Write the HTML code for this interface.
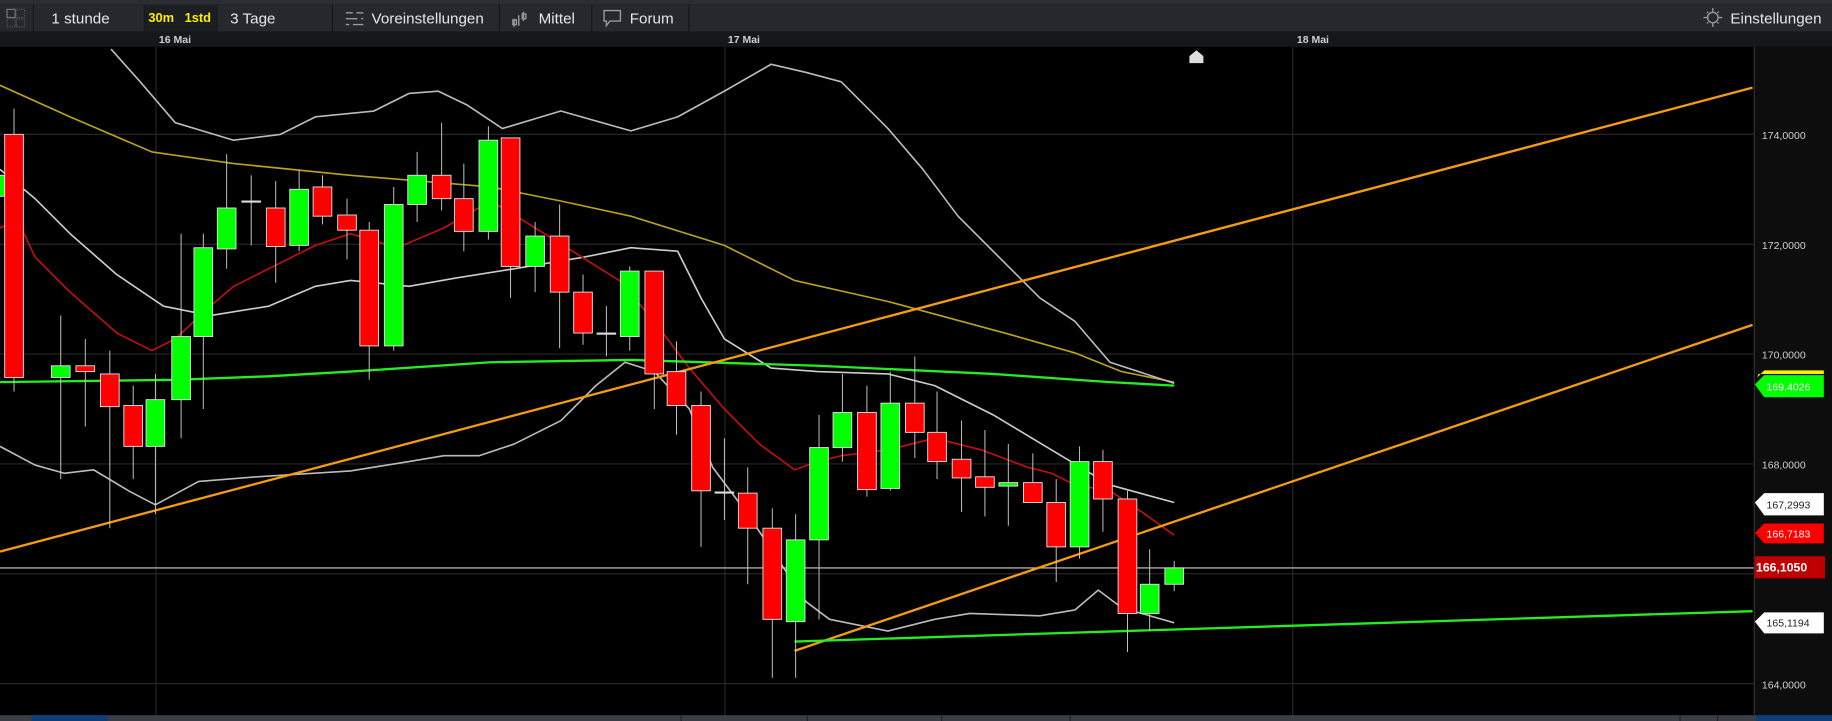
<!DOCTYPE html>
<html><head><meta charset="utf-8"><style>
html,body{margin:0;padding:0;background:#000;overflow:hidden}
svg{display:block}
text{font-family:"Liberation Sans",sans-serif}
</style></head><body>
<svg width="1832" height="721" viewBox="0 0 1568 617" preserveAspectRatio="none" xmlns="http://www.w3.org/2000/svg">
<rect width="1568" height="617" fill="#000"/>
<!-- top strip -->
<rect x="0" y="0" width="1568" height="4" fill="#2a2e33"/>
<!-- toolbar -->
<rect x="0" y="4" width="1568" height="23" fill="#25292d"/>
<g stroke="#14171a" stroke-width="1">
<line x1="28.5" y1="4" x2="28.5" y2="27"/><line x1="123.5" y1="4" x2="123.5" y2="27"/>
<line x1="154.5" y1="4" x2="154.5" y2="27"/><line x1="185.5" y1="4" x2="185.5" y2="27"/>
<line x1="284.5" y1="4" x2="284.5" y2="27"/><line x1="427.5" y1="4" x2="427.5" y2="27"/>
<line x1="506.5" y1="4" x2="506.5" y2="27"/><line x1="589.5" y1="4" x2="589.5" y2="27"/>
</g>
<rect x="124" y="4" width="61" height="23" fill="#1c1f22"/>
<rect x="6" y="8" width="7" height="7" fill="none" stroke="#777" stroke-width="1"/>
<rect x="14" y="8" width="7" height="7" fill="none" stroke="#555" stroke-width="1" stroke-dasharray="1,1"/>
<rect x="6" y="16" width="7" height="7" fill="none" stroke="#555" stroke-width="1" stroke-dasharray="1,1"/>
<rect x="14" y="16" width="7" height="7" fill="none" stroke="#555" stroke-width="1" stroke-dasharray="1,1"/>
<g font-size="13" fill="#e6e6e6">
<text x="44" y="20">1 stunde</text>
<text x="127" y="19" fill="#ffee00" font-size="11" font-weight="bold">30m</text>
<text x="158" y="19" fill="#ffee00" font-size="11" font-weight="bold">1std</text>
<text x="197" y="20">3 Tage</text>
<text x="318" y="20">Voreinstellungen</text>
<text x="461" y="20">Mittel</text>
<text x="539" y="20">Forum</text>
<text x="1481" y="20">Einstellungen</text>
</g>
<g stroke="#999" stroke-width="1.2" fill="none">
<path d="M296 11h6M305 11h6M296 16h10M309 16h2M296 21h3M302 21h9"/>
<path d="M440 16v7M444 13v9M448 10v8"/><rect x="439" y="17" width="3" height="4"/><rect x="447" y="12" width="3" height="4"/>
<path d="M517 9h14v9h-9l-3 4v-4h-2z"/>
<circle cx="1466" cy="15" r="4.5"/><path d="M1458 15h3M1471 15h3M1466 7v3M1466 20v3M1461 10l1 1M1471 10l-1 1M1461 20l1-1M1471 20l-1-1"/>
</g>
<!-- date row -->
<rect x="0" y="27" width="1568" height="13" fill="#151719"/>
<g font-size="9" fill="#cfcfcf" font-weight="bold"><text x="136" y="37">16 Mai</text><text x="623" y="37">17 Mai</text><text x="1110" y="37">18 Mai</text></g>
<!-- axis -->
<rect x="1501" y="40" width="67" height="572" fill="#0d0d0d"/>
<line x1="1501.5" y1="40" x2="1501.5" y2="612" stroke="#333"/>
<!-- grid -->
<g stroke="#262626" stroke-width="1">
<line x1="0" y1="115" x2="1501" y2="115"/><line x1="0" y1="209" x2="1501" y2="209"/>
<line x1="0" y1="303" x2="1501" y2="303"/><line x1="0" y1="397" x2="1501" y2="397"/>
<line x1="0" y1="491" x2="1501" y2="491"/><line x1="0" y1="585" x2="1501" y2="585"/>
<line x1="133.5" y1="40" x2="133.5" y2="612"/><line x1="620.5" y1="40" x2="620.5" y2="612"/><line x1="1106.5" y1="40" x2="1106.5" y2="612"/>
</g>
<g font-size="9" fill="#cfcfcf"><text x="1508" y="119">174,0000</text><text x="1508" y="213">172,0000</text><text x="1508" y="307">170,0000</text><text x="1508" y="401">168,0000</text><text x="1508" y="589">164,0000</text></g>
<line x1="0" y1="486" x2="1501" y2="486" stroke="#cfcfcf" stroke-width="1"/>
<!-- house -->
<path d="M1018 54v-6l6-5 6 5v6z" fill="#ddd"/>
<!-- indicator lines -->
<g fill="none" stroke-width="1.4" stroke-linejoin="round">
<polyline stroke="#b8a31c" points="0,73 60,100 130,130 200,140 300,150 420,160 480,172 540,185 620,210 680,240 760,258 860,285 920,302 960,318 1005,327"/>
<polyline stroke="#bbb" points="95,42 120,70 150,105 200,120 240,115 270,100 320,95 350,80 375,78 400,90 430,110 480,95 540,112 580,100 620,78 660,55 690,62 720,70 760,110 790,145 820,185 860,225 890,255 920,275 950,310 1005,328"/>
<polyline stroke="#bbb" points="0,382 30,398 55,405 80,402 110,420 133,432 170,412 220,408 300,403 350,395 380,390 410,390 440,380 480,360 510,330 535,310 560,318 590,350 610,400 640,440 660,470 690,515 710,530 760,540 800,530 830,525 890,527 920,522 940,505 960,520 1005,533"/>
<polyline stroke="#ccc" points="0,145 30,170 60,200 100,235 140,262 180,270 230,262 270,245 300,240 350,245 390,238 440,230 500,220 540,212 580,215 600,255 620,290 660,315 700,318 760,320 800,330 850,355 900,385 950,415 1005,430"/>
<polyline stroke="#c01010" points="0,195 15,188 30,220 60,250 100,285 130,300 150,290 180,262 200,245 240,225 270,210 300,200 340,212 380,195 420,172 450,190 490,215 530,240 560,275 590,315 620,350 650,380 680,402 700,395 720,390 760,385 800,375 840,385 880,400 900,405 920,415 950,420 980,440 1005,458"/>
<polyline stroke="#22ee22" stroke-width="2" points="0,327 150,325 230,322 300,318 420,310 540,308 700,313 850,320 950,327 1005,330"/>
<line x1="0" y1="472" x2="1500" y2="75" stroke="#f39c12" stroke-width="2"/>
<line x1="680" y1="557" x2="1500" y2="278" stroke="#f39c12" stroke-width="2"/>
<line x1="680" y1="549" x2="1500" y2="523" stroke="#22ee22" stroke-width="2"/>
</g>
<!-- candles -->
<g stroke="#ccc" stroke-width="0.8">
<path d="M12 93V335M52 270V410M73 290V365M94 300V452M114 330V410M133 320V440M155 200V375M174 200V350M194 132V230M215 150V210M236 155V242M256 145V215M276 150V192M297 170V222M316 190V325M337 160V300M357 130V190M378 105V180M397 140V215M418 108V205M437 118V255M458 190V250M479 175V298M499 235V295M519 262V305M539 228V300M560 250V350M579 292V372M600 335V468M620 375V445M640 400V500M661 435V580M681 440V580M701 355V530M721 320V395M742 330V425M762 318V420M783 305V392M802 335V410M823 360V438M843 368V442M863 380V450M884 388V430M904 410V498M924 382V478M944 385V455M965 420V558M984 470V540M1005 480V506"/>
</g>
<g stroke="#ddd" stroke-width="0.8">
<rect x="-8" y="150" width="12" height="18" fill="#00ff00"/>
<rect x="4" y="115" width="16" height="208" fill="#ff0000"/>
<rect x="44" y="313" width="16" height="10" fill="#00ff00"/>
<rect x="65" y="313" width="16" height="5" fill="#ff0000"/>
<rect x="86" y="320" width="16" height="28" fill="#ff0000"/>
<rect x="106" y="347" width="16" height="35" fill="#ff0000"/>
<rect x="125" y="342" width="16" height="40" fill="#00ff00"/>
<rect x="147" y="288" width="16" height="54" fill="#00ff00"/>
<rect x="166" y="212" width="16" height="76" fill="#00ff00"/>
<rect x="186" y="178" width="16" height="35" fill="#00ff00"/>
<rect x="207" y="172" width="16" height="1" fill="#ddd"/>
<rect x="228" y="178" width="16" height="33" fill="#ff0000"/>
<rect x="248" y="162" width="16" height="48" fill="#00ff00"/>
<rect x="268" y="160" width="16" height="25" fill="#ff0000"/>
<rect x="289" y="184" width="16" height="13" fill="#ff0000"/>
<rect x="308" y="197" width="16" height="99" fill="#ff0000"/>
<rect x="329" y="175" width="16" height="121" fill="#00ff00"/>
<rect x="349" y="150" width="16" height="25" fill="#00ff00"/>
<rect x="370" y="150" width="16" height="20" fill="#ff0000"/>
<rect x="389" y="170" width="16" height="28" fill="#ff0000"/>
<rect x="410" y="120" width="16" height="78" fill="#00ff00"/>
<rect x="429" y="118" width="16" height="110" fill="#ff0000"/>
<rect x="450" y="202" width="16" height="26" fill="#00ff00"/>
<rect x="471" y="202" width="16" height="48" fill="#ff0000"/>
<rect x="491" y="250" width="16" height="35" fill="#ff0000"/>
<rect x="511" y="285" width="16" height="1" fill="#ddd"/>
<rect x="531" y="232" width="16" height="56" fill="#00ff00"/>
<rect x="552" y="232" width="16" height="88" fill="#ff0000"/>
<rect x="571" y="318" width="16" height="29" fill="#ff0000"/>
<rect x="592" y="347" width="16" height="73" fill="#ff0000"/>
<rect x="612" y="421" width="16" height="1" fill="#ddd"/>
<rect x="632" y="422" width="16" height="30" fill="#ff0000"/>
<rect x="653" y="452" width="16" height="78" fill="#ff0000"/>
<rect x="673" y="462" width="16" height="70" fill="#00ff00"/>
<rect x="693" y="383" width="16" height="79" fill="#00ff00"/>
<rect x="713" y="353" width="16" height="30" fill="#00ff00"/>
<rect x="734" y="353" width="16" height="66" fill="#ff0000"/>
<rect x="754" y="345" width="16" height="73" fill="#00ff00"/>
<rect x="775" y="345" width="16" height="25" fill="#ff0000"/>
<rect x="794" y="370" width="16" height="25" fill="#ff0000"/>
<rect x="815" y="393" width="16" height="16" fill="#ff0000"/>
<rect x="835" y="408" width="16" height="9" fill="#ff0000"/>
<rect x="855" y="413" width="16" height="3" fill="#00ff00"/>
<rect x="876" y="413" width="16" height="17" fill="#ff0000"/>
<rect x="896" y="430" width="16" height="38" fill="#ff0000"/>
<rect x="916" y="395" width="16" height="73" fill="#00ff00"/>
<rect x="936" y="395" width="16" height="32" fill="#ff0000"/>
<rect x="957" y="427" width="16" height="98" fill="#ff0000"/>
<rect x="976" y="500" width="16" height="25" fill="#00ff00"/>
<rect x="997" y="486" width="16" height="14" fill="#00ff00"/>
</g>
<!-- axis labels -->
<path d="M1505 320h56v-3l-51 0-6 6z" fill="#ffee00"/>
<path d="M1502 329l8-8h51v19h-51z" fill="#00ff00"/>
<text x="1512" y="334" font-size="9" fill="#fff">169,4026</text>
<path d="M1502 430l8-8h51v19h-51z" fill="#fff"/>
<text x="1512" y="435" font-size="9" fill="#222">167,2993</text>
<path d="M1502 456l8-8h51v17h-51z" fill="#ff0000"/>
<text x="1512" y="460" font-size="9" fill="#fff">166,7183</text>
<rect x="1502" y="476" width="60" height="19" fill="#c00000"/>
<text x="1503" y="489" font-size="10.5" font-weight="bold" fill="#fff">166,1050</text>
<path d="M1502 532l8-8h51v18h-51z" fill="#fff"/>
<text x="1512" y="536" font-size="9" fill="#222">165,1194</text>
<!-- bottom strip -->
<rect x="0" y="612" width="1568" height="5" fill="#3a3f45"/>
<rect x="27" y="612" width="65" height="5" fill="#0d3e78"/>
<rect x="1503" y="612" width="65" height="5" fill="#0d3e78"/>
<g stroke="#222"><line x1="583" y1="612" x2="583" y2="617"/><line x1="691" y1="612" x2="691" y2="617"/><line x1="806" y1="612" x2="806" y2="617"/><line x1="916" y1="612" x2="916" y2="617"/><line x1="1438" y1="612" x2="1438" y2="617"/><line x1="1470" y1="612" x2="1470" y2="617"/></g>
</svg>
</body></html>
